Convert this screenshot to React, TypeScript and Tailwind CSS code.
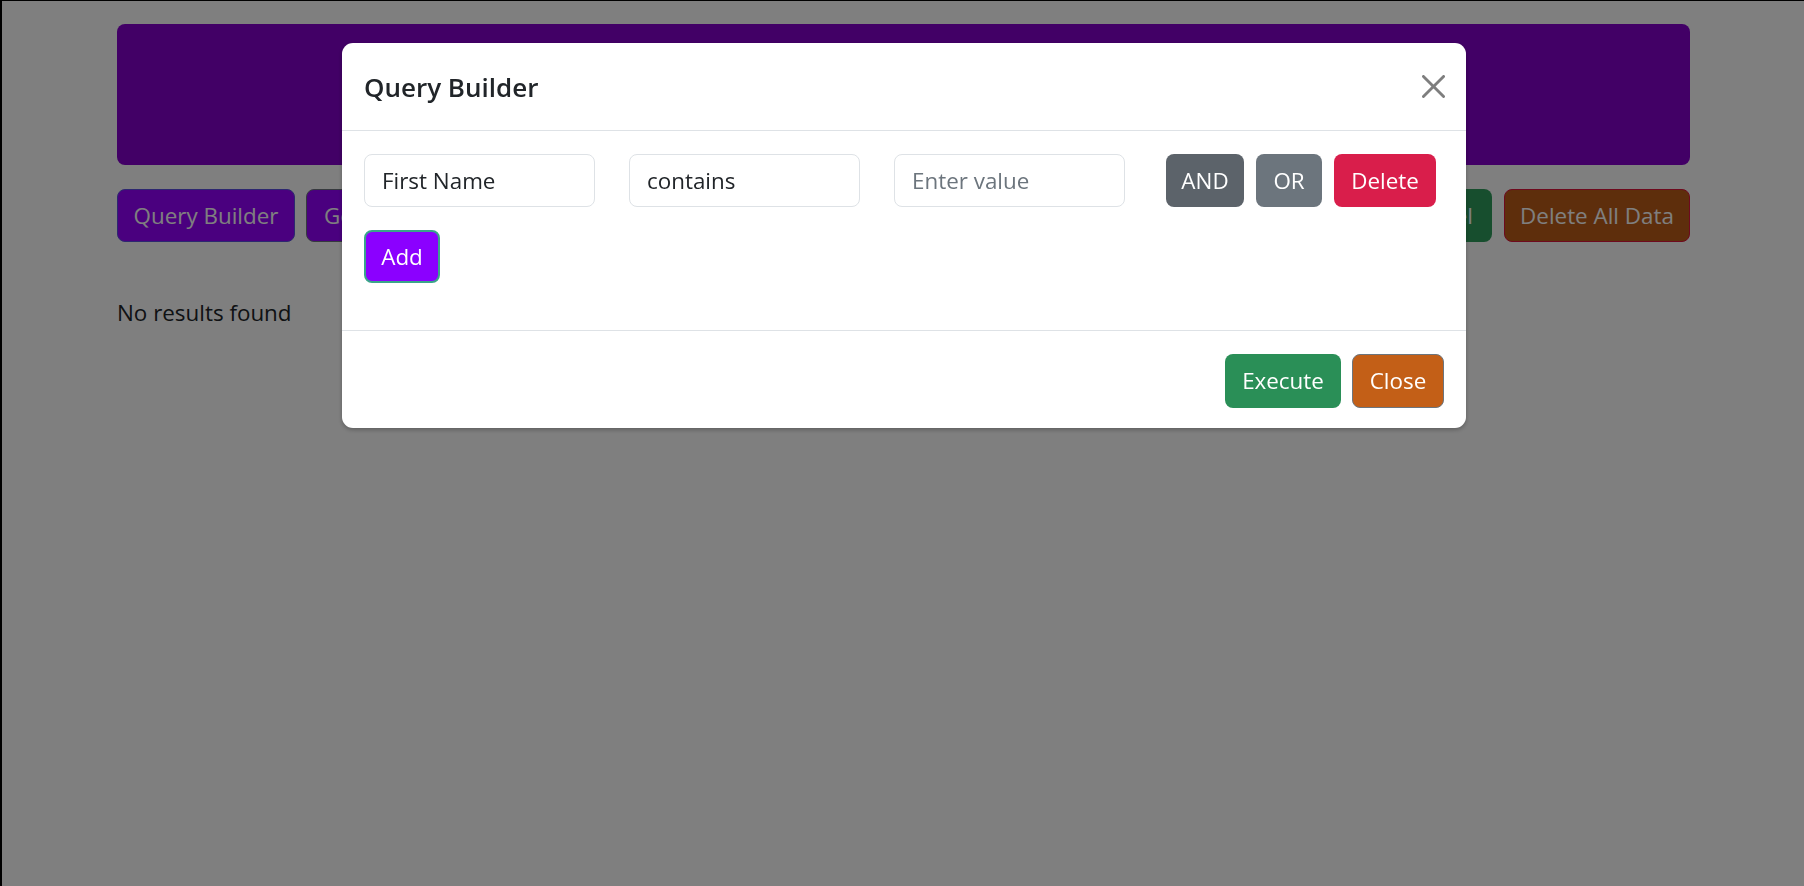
import React from "react";

function CloseIcon() {
  return (
    <svg width="23" height="23" viewBox="0 0 16 16" fill="#000" opacity="0.5">
      <path d="M.293.293a1 1 0 0 1 1.414 0L8 6.586 14.293.293a1 1 0 1 1 1.414 1.414L9.414 8l6.293 6.293a1 1 0 0 1-1.414 1.414L8 9.414l-6.293 6.293a1 1 0 0 1-1.414-1.414L6.586 8 .293 1.707a1 1 0 0 1 0-1.414z" />
    </svg>
  );
}

export default function App() {
  return (
    <div className="relative h-[886px] w-full overflow-hidden border-l-2 border-t border-black bg-white font-['Open_Sans',sans-serif] text-[#212529]">
      <div className="ml-[115px] w-[1573px] pt-[23px]">
        <div className="h-[141px] rounded-[8px] bg-[#8400cc]" />
        <div className="mt-[24px] flex justify-between">
          <div className="flex gap-[11px]">
            <button className="h-[53px] w-[178px] rounded-[8px] border-[1.5px] border-[#5a50e0] bg-[#9400ff] text-[22.4px] text-white">
              Query Builder
            </button>
            <button className="h-[53px] w-[190px] rounded-[8px] border-[1.5px] border-[#6c757d] bg-[#9400ff] pl-[17px] text-left text-[22.4px] text-white">
              Generate Data
            </button>
          </div>
          <div className="flex gap-[12px]">
            <button className="h-[53px] w-[190px] rounded-[8px] bg-[#2f9c5c] pr-[19px] text-right text-[22.4px] text-white">
              Export to Excel
            </button>
            <button className="h-[53px] w-[186px] rounded-[8px] border-[1.5px] border-[#dc143c] bg-[#bc5c18] text-[22.4px] text-white">
              Delete All Data
            </button>
          </div>
        </div>
        <p className="mt-[54px] text-[22.4px] leading-[33.6px]">No results found</p>
      </div>

      <div className="fixed inset-0 bg-black/50" />

      <div className="fixed inset-0 flex justify-center pl-[4px]">
        <div className="mt-[43px] h-fit w-[1124px] rounded-[11px] bg-white shadow-[0_2px_4px_rgba(0,0,0,0.25)]">
          <div className="flex h-[88px] items-center justify-between border-b-[1.5px] border-[#dee2e6] pl-[22px] pr-[21px]">
            <h5 className="text-[26px] font-semibold leading-[42px] text-[#212529]">Query Builder</h5>
            <button className="flex items-center justify-center">
              <CloseIcon />
            </button>
          </div>
          <div className="px-[22px] pb-[47px] pt-[23px]">
            <div className="flex items-center">
              <div className="flex gap-[34px]">
                <div className="flex h-[53px] w-[231px] items-center rounded-[8px] border-[1.5px] border-[#dee2e6] px-[17px] text-[22.4px] text-[#212529]">
                  First Name
                </div>
                <div className="flex h-[53px] w-[231px] items-center rounded-[8px] border-[1.5px] border-[#dee2e6] px-[17px] text-[22.4px] text-[#212529]">
                  contains
                </div>
                <input
                  placeholder="Enter value"
                  className="h-[53px] w-[231px] rounded-[8px] border-[1.5px] border-[#dee2e6] px-[17px] text-[22.4px] text-[#212529] outline-none placeholder:text-[#6c757d]"
                />
              </div>
              <div className="ml-[41px] flex gap-[12px]">
                <button className="h-[53px] w-[78px] rounded-[8px] bg-[#5c636a] text-[22.4px] text-white">AND</button>
                <button className="h-[53px] w-[66px] rounded-[8px] bg-[#6c757d] text-[22.4px] text-white">OR</button>
                <button className="h-[53px] w-[102px] rounded-[8px] bg-[#d91e4b] text-[22.4px] text-white">Delete</button>
              </div>
            </div>
            <button className="mt-[23px] h-[53px] w-[76px] rounded-[8px] border-2 border-[#3aa58a] bg-[#8b00ff] text-[22.4px] text-white">
              Add
            </button>
          </div>
          <div className="flex justify-end gap-[11px] border-t-[1.5px] border-[#dee2e6] pb-[20px] pr-[22px] pt-[23px]">
            <button className="h-[54px] w-[116px] rounded-[8px] bg-[#2a8f57] text-[22.4px] text-white">Execute</button>
            <button className="h-[54px] w-[92px] rounded-[8px] border-[1.5px] border-[#6c757d] bg-[#c35f17] text-[22.4px] text-white">
              Close
            </button>
          </div>
        </div>
      </div>
    </div>
  );
}
